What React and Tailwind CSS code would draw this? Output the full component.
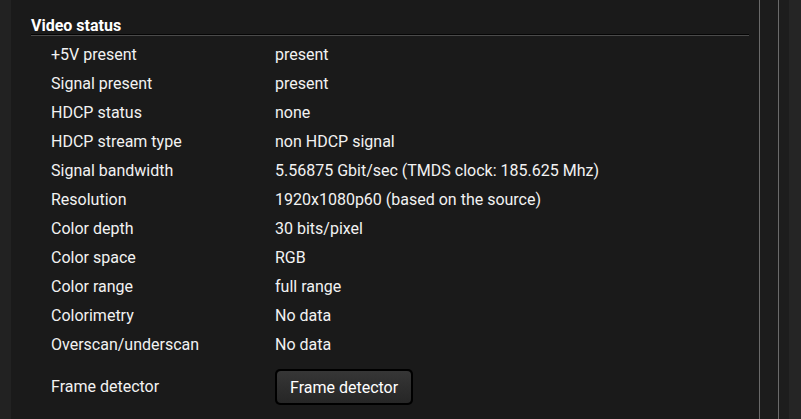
export default function App() {
  const rows = [
    ["+5V present", "present"],
    ["Signal present", "present"],
    ["HDCP status", "none"],
    ["HDCP stream type", "non HDCP signal"],
    ["Signal bandwidth", "5.56875 Gbit/sec (TMDS clock: 185.625 Mhz)"],
    ["Resolution", "1920x1080p60 (based on the source)"],
    ["Color depth", "30 bits/pixel"],
    ["Color space", "RGB"],
    ["Color range", "full range"],
    ["Colorimetry", "No data"],
    ["Overscan/underscan", "No data"],
  ];
  return (
    <div className="flex w-[801px] h-[419px] overflow-hidden bg-[#1a1a1a] text-[#f2f2f2]" style={{ fontFamily: "Roboto, 'Liberation Sans', sans-serif" }}>
      <div className="w-[11px] shrink-0 bg-[#222222]" />
      <div className="w-[748px] shrink-0 pl-[20px] pr-[10px] pt-[18px]">
        <div className="text-[16px] font-bold leading-[16px] text-white">Video status</div>
        <div className="h-px bg-[#050505]" />
        <div className="h-px bg-[#4a4a4a]" />
        <div className="pt-[4px]">
          {rows.map(([k, v]) => (
            <div key={k} className="flex h-[29px] items-center text-[16px]">
              <div className="w-[244px] pl-[20px]">{k}</div>
              <div>{v}</div>
            </div>
          ))}
          <div className="flex h-[40px] items-center text-[16px] mt-[8px]">
            <div className="w-[244px] pl-[20px]">Frame detector</div>
            <div className="rounded-[5px] bg-black p-[2px]">
              <div className="rounded-[4px] bg-gradient-to-b from-[#363636] to-[#262626] px-[13px] pt-[2px] h-[32px] flex items-center text-white">
                Frame detector
              </div>
            </div>
          </div>
        </div>
      </div>
      <div className="w-px bg-[#6a6a6a]" />
      <div className="w-[18px] bg-[#1c1c1c]" />
      <div className="w-px bg-[#6a6a6a]" />
      <div className="w-[10px] bg-[#1d1d1d]" />
      <div className="flex-1 bg-[#252525]" />
    </div>
  );
}
